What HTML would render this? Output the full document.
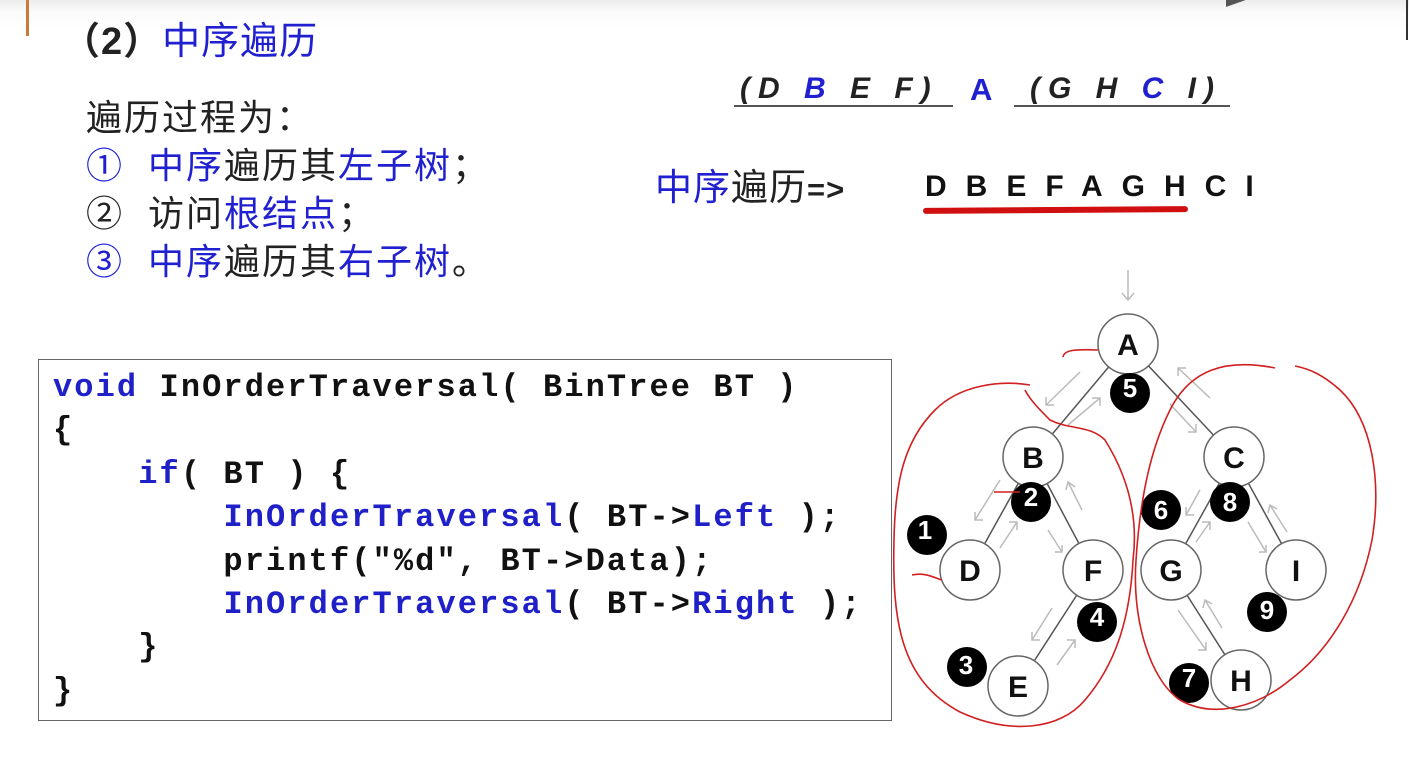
<!DOCTYPE html>
<html><head><meta charset="utf-8"><style>
html,body{margin:0;padding:0}
body{width:1409px;height:778px;overflow:hidden;background:linear-gradient(#ececec 0,#fbfbfb 12px,#fff 30px);position:relative;font-family:"Liberation Sans","Noto Sans CJK SC",sans-serif}
.a{position:absolute;white-space:nowrap}
.b{color:#2020d0}
.cn{font-size:36px;color:#222;line-height:40px;letter-spacing:2px}
.code{position:absolute;left:38px;top:359px;width:852px;height:360px;border:1px solid #666;background:#fff}
.code pre{margin:0;position:absolute;left:14px;top:6px;font-family:"Liberation Mono",monospace;font-weight:bold;font-size:32px;letter-spacing:2.1px;line-height:43.4px;color:#111}
.code .k{color:#2020c8}
</style></head><body>
<div class="a" style="left:26px;top:0;width:3px;height:36px;background:#c87b3a"></div>
<div class="a" style="right:1px;top:0;width:2px;height:40px;background:#333"></div>
<div class="a" style="left:1226px;top:-3px;width:28px;height:10px;background:#555;clip-path:polygon(0 30%,100% 0,0 100%)"></div>
<div class="a cn" style="left:62px;top:22px;font-size:38px;letter-spacing:1px"><b style="color:#222">（2）</b><span class="b">中序遍历</span></div>
<div class="a cn" style="left:86px;top:98px">遍历过程为：</div>
<div class="a cn" style="left:86px;top:146px"><span class="b">①&nbsp; 中序</span>遍历其<span class="b">左子树</span>；</div>
<div class="a cn" style="left:86px;top:194px">②&nbsp; 访问<span class="b">根结点</span>；</div>
<div class="a cn" style="left:86px;top:242px"><span class="b">③&nbsp; 中序</span>遍历其<span class="b">右子树</span>。</div>

<div class="a" style="left:740px;top:72px;font-size:30px;font-style:italic;font-weight:bold;color:#222;letter-spacing:8px">(D <span class="b">B</span> E F)</div>
<div class="a b" style="left:970px;top:72px;font-size:31px;font-weight:bold">A</div>
<div class="a" style="left:1030px;top:72px;font-size:30px;font-style:italic;font-weight:bold;color:#222;letter-spacing:8px">(G H <span class="b">C</span> I)</div>
<div class="a" style="left:734px;top:105px;width:219px;height:2px;background:#555"></div>
<div class="a" style="left:1014px;top:105px;width:216px;height:2px;background:#555"></div>

<div class="a cn" style="left:655px;top:168px;font-size:37px;letter-spacing:1px"><span class="b">中序</span>遍历<b style="font-size:31px">=&gt;</b></div>
<div class="a" style="left:925px;top:170px;font-size:30px;font-weight:bold;color:#111;letter-spacing:19px">DBEFAGHCI</div>
<div class="a" style="left:923px;top:207px;width:265px;height:6px;border-radius:3px;background:#d01010;transform:rotate(-0.4deg)"></div>

<div class="code"><pre><span class="k">void</span> InOrderTraversal( BinTree BT )
{
    <span class="k">if</span>( BT ) {
        <span class="k">InOrderTraversal</span>( BT-&gt;<span class="k">Left</span> );
        printf("%d", BT-&gt;Data);
        <span class="k">InOrderTraversal</span>( BT-&gt;<span class="k">Right</span> );
    }
}</pre></div>

<svg class="a" style="left:0;top:0" width="1409" height="778" viewBox="0 0 1409 778">
<g stroke="#555" stroke-width="1.5">
<line x1="1128" y1="344" x2="1033" y2="457"/><line x1="1128" y1="344" x2="1234" y2="457"/>
<line x1="1033" y1="457" x2="970" y2="570"/><line x1="1033" y1="457" x2="1093" y2="570"/>
<line x1="1093" y1="570" x2="1018" y2="686"/>
<line x1="1234" y1="457" x2="1171" y2="570"/><line x1="1234" y1="457" x2="1296" y2="570"/>
<line x1="1171" y1="570" x2="1241" y2="680"/>
</g>
<g stroke="#bbb" stroke-width="1.5" fill="none">
<path d="M1128 270 V300 M1122 293 L1128 300 L1134 293"/>
<path d="M1080 372 L1046 405 M1046 397 V405 H1054"/>
<path d="M1068 425 L1100 398 M1092 398 H1100 V406"/>
<path d="M1170 404 L1196 432 M1188 432 H1196 V424"/>
<path d="M1210 398 L1178 368 M1178 376 V368 H1186"/>
<path d="M1000 480 L975 520 M975 512 V520 H983"/>
<path d="M1000 548 L1017 522 M1009 522 H1017 V530"/>
<path d="M1048 530 L1062 552 M1055 552 H1062 V545"/>
<path d="M1082 510 L1068 482 M1066 490 L1068 482 L1075 487"/>
<path d="M1052 608 L1032 640 M1032 632 V640 H1040"/>
<path d="M1057 665 L1075 640 M1067 640 H1075 V648"/>
<path d="M1200 490 L1186 515 M1186 507 V515 H1194"/>
<path d="M1196 542 L1210 522 M1202 522 H1210 V530"/>
<path d="M1248 522 L1266 552 M1259 552 H1266 V545"/>
<path d="M1287 532 L1270 505 M1268 513 L1270 505 L1277 509"/>
<path d="M1178 610 L1206 650 M1198 650 H1206 V642"/>
<path d="M1222 628 L1205 600 M1203 608 L1205 600 L1212 604"/>
</g>
<g fill="#fff" stroke="#666" stroke-width="1.5">
<circle cx="1128" cy="344" r="30"/><circle cx="1033" cy="457" r="30"/><circle cx="1234" cy="457" r="30"/>
<circle cx="970" cy="570" r="30"/><circle cx="1093" cy="570" r="30"/><circle cx="1171" cy="570" r="30"/>
<circle cx="1296" cy="570" r="30"/><circle cx="1018" cy="686" r="30"/><circle cx="1241" cy="680" r="30"/>
</g>
<g font-family="Liberation Sans" font-weight="bold" font-size="30" text-anchor="middle" fill="#111">
<text x="1128" y="355">A</text><text x="1033" y="468">B</text><text x="1234" y="468">C</text>
<text x="970" y="581">D</text><text x="1093" y="581">F</text><text x="1171" y="581">G</text>
<text x="1296" y="581">I</text><text x="1018" y="697">E</text><text x="1241" y="691">H</text>
</g>
<g fill="#000">
<circle cx="1130" cy="393" r="20"/><circle cx="1031" cy="502" r="20"/><circle cx="927" cy="535" r="20"/>
<circle cx="1161" cy="510" r="20"/><circle cx="1230" cy="502" r="20"/><circle cx="1097" cy="622" r="20"/>
<circle cx="1267" cy="612" r="20"/><circle cx="967" cy="667" r="20"/><circle cx="1189" cy="683" r="20"/>
</g>
<g font-family="Liberation Sans" font-weight="bold" font-size="26" text-anchor="middle" fill="#fff">
<text x="1130" y="397">5</text><text x="1031" y="506">2</text><text x="925" y="539">1</text>
<text x="1161" y="519">6</text><text x="1230" y="511">8</text><text x="1097" y="626">4</text>
<text x="1267" y="619">9</text><text x="966" y="674">3</text><text x="1189" y="687">7</text>
</g>
<g stroke="#d02020" stroke-width="1.6" fill="none">
<path d="M1030 385 C1000 380 960 385 935 410 C905 440 895 480 894 540 C892 620 900 680 960 712 C1010 735 1060 730 1085 700 C1115 665 1130 620 1133 560 C1138 520 1130 480 1105 440 C1090 425 1070 430 1050 420 C1040 410 1030 400 1025 390"/>
<path d="M1063 357 C1064 350 1075 349 1098 350"/>
<path d="M1275 368 C1225 358 1190 370 1170 410 C1150 450 1140 500 1136 560 C1132 620 1150 680 1180 700 C1215 720 1260 705 1290 680 C1330 650 1360 600 1372 540 C1382 480 1372 420 1340 390 C1320 372 1305 368 1295 366"/>
<path d="M912 575 C925 572 935 578 942 580"/>
<path d="M994 492 L1020 492"/>
</g>
</svg>
</body></html>
